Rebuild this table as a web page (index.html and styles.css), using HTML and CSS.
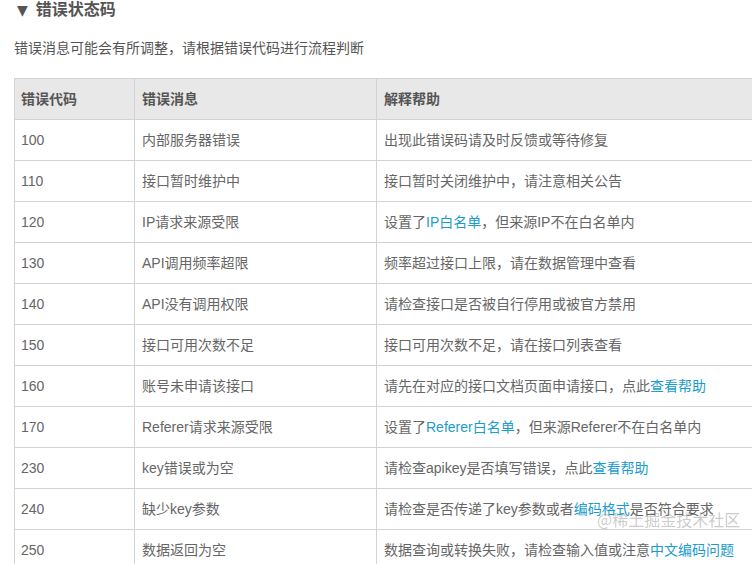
FILE: index.html
```html
<!DOCTYPE html>
<html lang="zh-CN">
<head>
<meta charset="utf-8">
<title>错误状态码</title>
<link rel="stylesheet" href="styles.css">
</head>
<body>
<div class="page">
  <h3 class="title"><span class="caret">▼</span><span class="title-text">错误状态码</span></h3>
  <p class="desc">错误消息可能会有所调整，请根据错误代码进行流程判断</p>
  <table class="codes">
    <colgroup><col class="c1"><col class="c2"><col class="c3"></colgroup>
    <thead>
      <tr><th>错误代码</th><th>错误消息</th><th>解释帮助</th></tr>
    </thead>
    <tbody>
      <tr><td>100</td><td>内部服务器错误</td><td>出现此错误码请及时反馈或等待修复</td></tr>
      <tr><td>110</td><td>接口暂时维护中</td><td>接口暂时关闭维护中，请注意相关公告</td></tr>
      <tr><td>120</td><td>IP请求来源受限</td><td>设置了<a class="link">IP白名单</a>，但来源IP不在白名单内</td></tr>
      <tr><td>130</td><td>API调用频率超限</td><td>频率超过接口上限，请在数据管理中查看</td></tr>
      <tr><td>140</td><td>API没有调用权限</td><td>请检查接口是否被自行停用或被官方禁用</td></tr>
      <tr><td>150</td><td>接口可用次数不足</td><td>接口可用次数不足，请在接口列表查看</td></tr>
      <tr><td>160</td><td>账号未申请该接口</td><td>请先在对应的接口文档页面申请接口，点此<a class="link">查看帮助</a></td></tr>
      <tr><td>170</td><td>Referer请求来源受限</td><td>设置了<a class="link">Referer白名单</a>，但来源Referer不在白名单内</td></tr>
      <tr><td>230</td><td>key错误或为空</td><td>请检查apikey是否填写错误，点此<a class="link">查看帮助</a></td></tr>
      <tr><td>240</td><td>缺少key参数</td><td>请检查是否传递了key参数或者<a class="link">编码格式</a>是否符合要求</td></tr>
      <tr><td>250</td><td>数据返回为空</td><td>数据查询或转换失败，请检查输入值或注意<a class="link">中文编码问题</a></td></tr>
    </tbody>
  </table>
</div>
<div class="watermark">@稀土掘金技术社区</div>
</body>
</html>
```

FILE: styles.css
```css
html, body {
  margin: 0;
  padding: 0;
  background: #fff;
  overflow: hidden;
}
body {
  font-family: "Liberation Sans", "Noto Sans CJK SC", sans-serif;
  color: #666;
  font-size: 14px;
}
.page {
  padding: 0 0 0 14px;
  width: 800px;
}
.title {
  margin: 0;
  font-size: 16px;
  line-height: 20px;
  font-weight: bold;
  color: #555;
  padding-left: 3px;
  display: flex;
  align-items: center;
}
.caret {
  font-size: 14px;
  font-family: "DejaVu Sans", sans-serif;
  margin-right: 8px;
}
.title-text {
  font-size: 16px;
}
.desc {
  margin: 18px 0 0 0;
  font-size: 14px;
  line-height: 20px;
  color: #555;
}
.codes {
  margin-top: 20px;
  border-collapse: collapse;
  table-layout: fixed;
  width: 790px;
}
.c1 { width: 120px; }
.c2 { width: 242px; }
.c3 { width: 428px; }
.codes th, .codes td {
  border: 1px solid #d3d3d3;
  padding: 10px 7px 10px 6px;
  line-height: 20px;
  height: 20px;
  text-align: left;
  white-space: nowrap;
  vertical-align: middle;
}
.codes th {
  background: #e8e8e8;
  color: #555;
  font-weight: bold;
}
.codes td {
  color: #666;
}
.codes td + td, .codes th + th {
  padding-left: 7px;
}
.link {
  color: #1b9ccc;
  text-decoration: none;
}
.watermark {
  position: absolute;
  left: 597px;
  top: 508px;
  font-size: 16px;
  line-height: 22px;
  color: rgba(140, 140, 140, 0.45);
  white-space: nowrap;
  font-family: "Noto Sans CJK SC", sans-serif;
}
```
